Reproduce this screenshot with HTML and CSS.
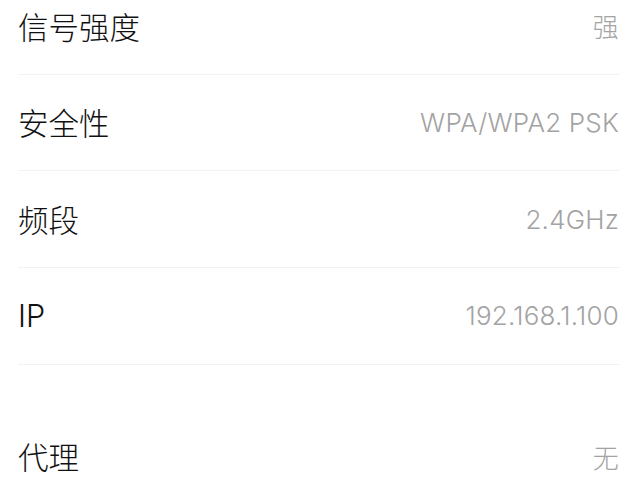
FILE: index.html
```html
<!DOCTYPE html>
<html lang="zh-CN">
<head>
    <meta charset="UTF-8">
    <meta name="viewport" content="width=device-width, initial-scale=1.0">
    <title>WLAN 详情</title>
    <link rel="stylesheet" href="styles.css">
</head>
<body>
    <div class="detalhes">
        <ul class="grupo">
            <li class="linha"><span class="rotulo">信号强度</span><span class="valor">强</span></li>
            <li class="linha"><span class="rotulo">安全性</span><span class="valor">WPA/WPA2 PSK</span></li>
            <li class="linha"><span class="rotulo">频段</span><span class="valor">2.4GHz</span></li>
            <li class="linha"><span class="rotulo">IP</span><span class="valor">192.168.1.100</span></li>
        </ul>
        <ul class="grupo">
            <li class="linha"><span class="rotulo">代理</span><span class="valor">无</span></li>
        </ul>
    </div>
</body>
</html>
```

FILE: styles.css
```css
body {
    font-family: "Inter", "Noto Sans CJK SC", sans-serif;
    background-color: #fff;
    color: #111;
    margin: 0;
    padding: 0;
    overflow: hidden;
}

.detalhes {
    margin-top: -22px;
    padding: 0 18px;
}

.grupo {
    list-style: none;
    margin: 0;
    padding: 0;
}

.grupo + .grupo {
    margin-top: 44px;
}

.linha {
    height: 96.67px;
    box-sizing: border-box;
    border-bottom: 1px solid #f2f2f2;
    display: flex;
    justify-content: space-between;
    align-items: center;
}

.rotulo {
    font-size: 30.5px;
    font-weight: 300;
    color: #111;
}

.valor {
    font-size: 26px;
    font-weight: 300;
    letter-spacing: 0.2px;
    color: #a3a3a3;
}
```
